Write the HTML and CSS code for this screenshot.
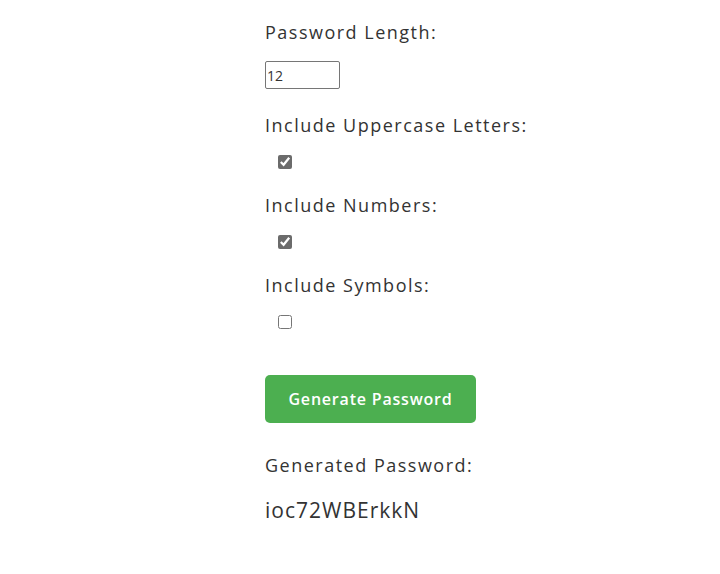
FILE: index.html
```html
<!DOCTYPE html>
<html>
<head>
<meta charset="utf-8">
<link rel="stylesheet" href="styles.css">
</head>
<body>
<div class="container">
  <label class="label" for="len">Password Length:</label>
  <input class="num" id="len" type="number" value="12">
  <label class="label" for="up">Include Uppercase Letters:</label>
  <div class="check-row"><input class="check" id="up" type="checkbox" checked></div>
  <label class="label" for="nums">Include Numbers:</label>
  <div class="check-row"><input class="check" id="nums" type="checkbox" checked></div>
  <label class="label" for="sym">Include Symbols:</label>
  <div class="check-row"><input class="check" id="sym" type="checkbox"></div>
  <button class="btn">Generate Password</button>
  <div class="label result-label">Generated Password:</div>
  <div class="result">ioc72WBErkkN</div>
</div>
</body>
</html>
```
FILE: styles.css
```css
html, body {
  margin: 0;
  padding: 0;
  background: #fff;
}
body {
  font-family: "Open Sans", "DejaVu Sans", sans-serif;
  color: #333;
}
.container {
  display: flex;
  flex-direction: column;
  align-items: flex-start;
  padding: 19px 0 0 265px;
}
.label {
  display: block;
  font-size: 18px;
  line-height: 27px;
  letter-spacing: 1.5px;
}
.num {
  margin: 15px 0 23px 0;
  width: 75px;
  height: 28px;
  box-sizing: border-box;
  border: 1px solid #767676;
  border-radius: 2px;
  padding: 0 1px;
  font-family: "Open Sans", sans-serif;
  font-size: 14px;
  color: #333;
}
.check-row {
  display: flex;
  padding: 16px 0 23px 13px;
}
.check {
  margin: 0;
  width: 14px;
  height: 14px;
  accent-color: #6b6b6b;
}
.btn {
  margin-top: 23px;
  width: 211px;
  height: 48px;
  border: none;
  border-radius: 5px;
  background: #4caf50;
  color: #fff;
  font-family: "Open Sans", sans-serif;
  font-weight: 600;
  font-size: 16px;
  letter-spacing: 0.8px;
  cursor: pointer;
}
.result-label {
  margin-top: 29px;
}
.result {
  margin-top: 16px;
  font-size: 21px;
  line-height: 30px;
  letter-spacing: 1px;
}
```
